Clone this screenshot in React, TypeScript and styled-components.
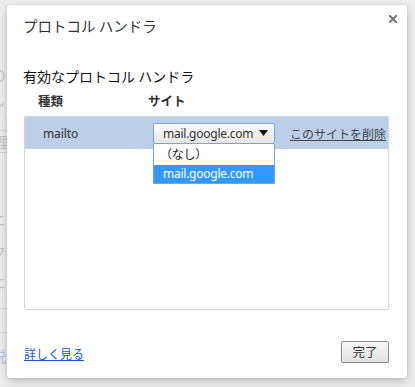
import React from 'react';
import styled, { createGlobalStyle } from 'styled-components';

const Global = createGlobalStyle`
  html, body { margin: 0; padding: 0; }
  body {
    width: 415px;
    height: 387px;
    overflow: hidden;
    background: #eeeeee;
    font-family: "Noto Sans", "Noto Sans CJK JP", sans-serif;
  }
`;

const Page = styled.div`
  position: relative;
  width: 415px;
  height: 387px;
  overflow: hidden;
  background: #eeeeee;
`;

const Backdrop = styled.div`
  display: flex;
  flex-direction: column;
  align-items: flex-start;
  margin-left: -9px;
  font-family: "Noto Sans CJK JP", sans-serif;
  font-size: 15px;
`;

const BgLine = styled.div<{ $gap: number; $blue?: boolean }>`
  margin-top: ${(p) => p.$gap}px;
  height: 20px;
  line-height: 20px;
  color: ${(p) => (p.$blue ? '#b9c5e6' : '#c6c6c6')};
`;

const BgBox = styled.div<{ $gap: number; $h: number; $w: number }>`
  margin-top: ${(p) => p.$gap}px;
  height: ${(p) => p.$h - 2}px;
  width: ${(p) => p.$w}px;
  margin-left: ${(p) => 9 - p.$w + 8}px;
  border: 1px solid #d2d2d2;
  display: flex;
  align-items: center;
  justify-content: flex-end;
  color: #c6c6c6;
  line-height: 1;
`;

const Dialog = styled.div`
  position: absolute;
  left: 7px;
  top: 5px;
  width: 400px;
  height: 373px;
  box-sizing: border-box;
  background: #ffffff;
  border-radius: 3px;
  box-shadow: 0 3px 10px rgba(0, 0, 0, 0.22), 0 0 2px rgba(0, 0, 0, 0.12);
  display: flex;
  flex-direction: column;
  padding: 11px 18px 15px 17px;
`;

const TitleBar = styled.div`
  display: flex;
  justify-content: space-between;
  align-items: flex-start;
  margin-right: -8px;
  margin-left: -1px;
`;

const Title = styled.div`
  font-family: "Noto Sans CJK JP", sans-serif;
  font-size: 14.5px;
  line-height: 20px;
  color: #333333;
`;

const CloseButton = styled.button`
  border: none;
  background: none;
  padding: 0;
  margin-top: -1px;
  width: 8px;
  height: 8px;
  display: flex;
  cursor: pointer;
`;

const SectionTitle = styled.div`
  margin-top: 30px;
  margin-left: -1px;
  font-family: "Noto Sans CJK JP", sans-serif;
  font-size: 14px;
  line-height: 20px;
  color: #111111;
`;

const HeaderRow = styled.div`
  margin-top: 6px;
  display: grid;
  grid-template-columns: 110px 1fr;
  padding-left: 14px;
  font-family: "Noto Sans CJK JP", sans-serif;
  font-weight: bold;
  font-size: 12.5px;
  line-height: 18px;
  color: #333333;
`;

const Table = styled.div`
  margin-top: 6px;
  height: 194px;
  box-sizing: border-box;
  border: 1px solid #d4d4d4;
  border-radius: 2px;
  display: flex;
  flex-direction: column;
`;

const Row = styled.div<{ $selected?: boolean }>`
  height: 32px;
  display: grid;
  grid-template-columns: 110px 122px auto;
  align-items: center;
  padding-left: 18px;
  background: ${(p) => (p.$selected ? '#bccfe9' : 'transparent')};
  color: #333333;
`;

const Cell = styled.div`
  font-family: "Noto Sans", "Noto Sans CJK JP", sans-serif;
  font-size: 12px;
  letter-spacing: -0.1px;
`;

const SelectWrap = styled.div`
  position: relative;
  height: 21px;
`;

const SelectBox = styled.div`
  height: 21px;
  box-sizing: border-box;
  border: 1px solid #7aa2dc;
  border-radius: 2px;
  background: linear-gradient(#fdfdfd, #e6e6e6);
  display: flex;
  align-items: center;
  justify-content: space-between;
  padding: 0 6px 0 9px;
  font-family: "Noto Sans", sans-serif;
  font-size: 12px;
  letter-spacing: -0.25px;
  color: #333333;
`;

const Arrow = styled.svg`
  width: 9px;
  height: 6px;
  flex: none;
`;

const DropList = styled.div`
  position: absolute;
  left: 0;
  right: 0;
  top: 21px;
  background: #ffffff;
  border: 1px solid #7aa2dc;
  border-top: none;
  box-sizing: border-box;
  display: flex;
  flex-direction: column;
  z-index: 2;
`;

const DropItem = styled.div<{ $active?: boolean }>`
  height: ${(p) => (p.$active ? 18 : 21)}px;
  line-height: ${(p) => (p.$active ? 18 : 21)}px;
  padding-left: ${(p) => (p.$active ? 9 : 6)}px;
  background: ${(p) => (p.$active ? '#3399ff' : '#ffffff')};
  color: ${(p) => (p.$active ? '#ffffff' : '#222222')};
  font-family: "Noto Sans", "Noto Sans CJK JP", sans-serif;
  font-size: 12px;
  letter-spacing: -0.25px;
`;

const RemoveLink = styled.a`
  margin-left: 15px;
  font-family: "Noto Sans CJK JP", sans-serif;
  font-size: 12px;
  color: #444444;
  text-decoration: underline;
  white-space: nowrap;
`;

const Spacer = styled.div`
  flex: 1;
`;

const Footer = styled.div`
  display: flex;
  justify-content: space-between;
  align-items: center;
`;

const LearnMore = styled.a`
  font-family: "Noto Sans CJK JP", sans-serif;
  font-size: 12px;
  color: #1a55d6;
  text-decoration: underline;
  margin-top: 2px;
`;

const DoneButton = styled.button`
  width: 48px;
  height: 22px;
  box-sizing: border-box;
  border: 1px solid #8a8a8a;
  border-radius: 2px;
  background: linear-gradient(#f7f7f7, #e3e3e3);
  font-family: "Noto Sans CJK JP", sans-serif;
  font-size: 12.5px;
  color: #333333;
  padding: 0;
  line-height: 20px;
`;

export default function App() {
  return (
    <Page>
      <Global />
      <Backdrop>
        <BgLine $gap={65}>の</BgLine>
        <BgLine $gap={13}>イ</BgLine>
        <BgBox $gap={12} $h={23} $w={30}>理</BgBox>
        <BgLine $gap={57}>ニ</BgLine>
        <BgLine $gap={12}>ク</BgLine>
        <BgLine $gap={11}>ニ</BgLine>
        <BgBox $gap={15} $h={25} $w={30} />
        <BgLine $gap={13} $blue>説</BgLine>
      </Backdrop>
      <Dialog>
        <TitleBar>
          <Title>プロトコル ハンドラ</Title>
          <CloseButton aria-label="close">
            <svg width="8" height="8" viewBox="0 0 8 8">
              <path d="M1 1 L7 7 M7 1 L1 7" stroke="#767676" strokeWidth="2" strokeLinecap="square" />
            </svg>
          </CloseButton>
        </TitleBar>
        <SectionTitle>有効なプロトコル ハンドラ</SectionTitle>
        <HeaderRow>
          <span>種類</span>
          <span>サイト</span>
        </HeaderRow>
        <Table>
          <Row $selected>
            <Cell>mailto</Cell>
            <SelectWrap>
              <SelectBox>
                <span>mail.google.com</span>
                <Arrow viewBox="0 0 9 6">
                  <path d="M0 0 H9 L4.5 6 Z" fill="#111111" />
                </Arrow>
              </SelectBox>
              <DropList>
                <DropItem>（なし）</DropItem>
                <DropItem $active>mail.google.com</DropItem>
              </DropList>
            </SelectWrap>
            <RemoveLink>このサイトを削除</RemoveLink>
          </Row>
        </Table>
        <Spacer />
        <Footer>
          <LearnMore>詳しく見る</LearnMore>
          <DoneButton>完了</DoneButton>
        </Footer>
      </Dialog>
    </Page>
  );
}
